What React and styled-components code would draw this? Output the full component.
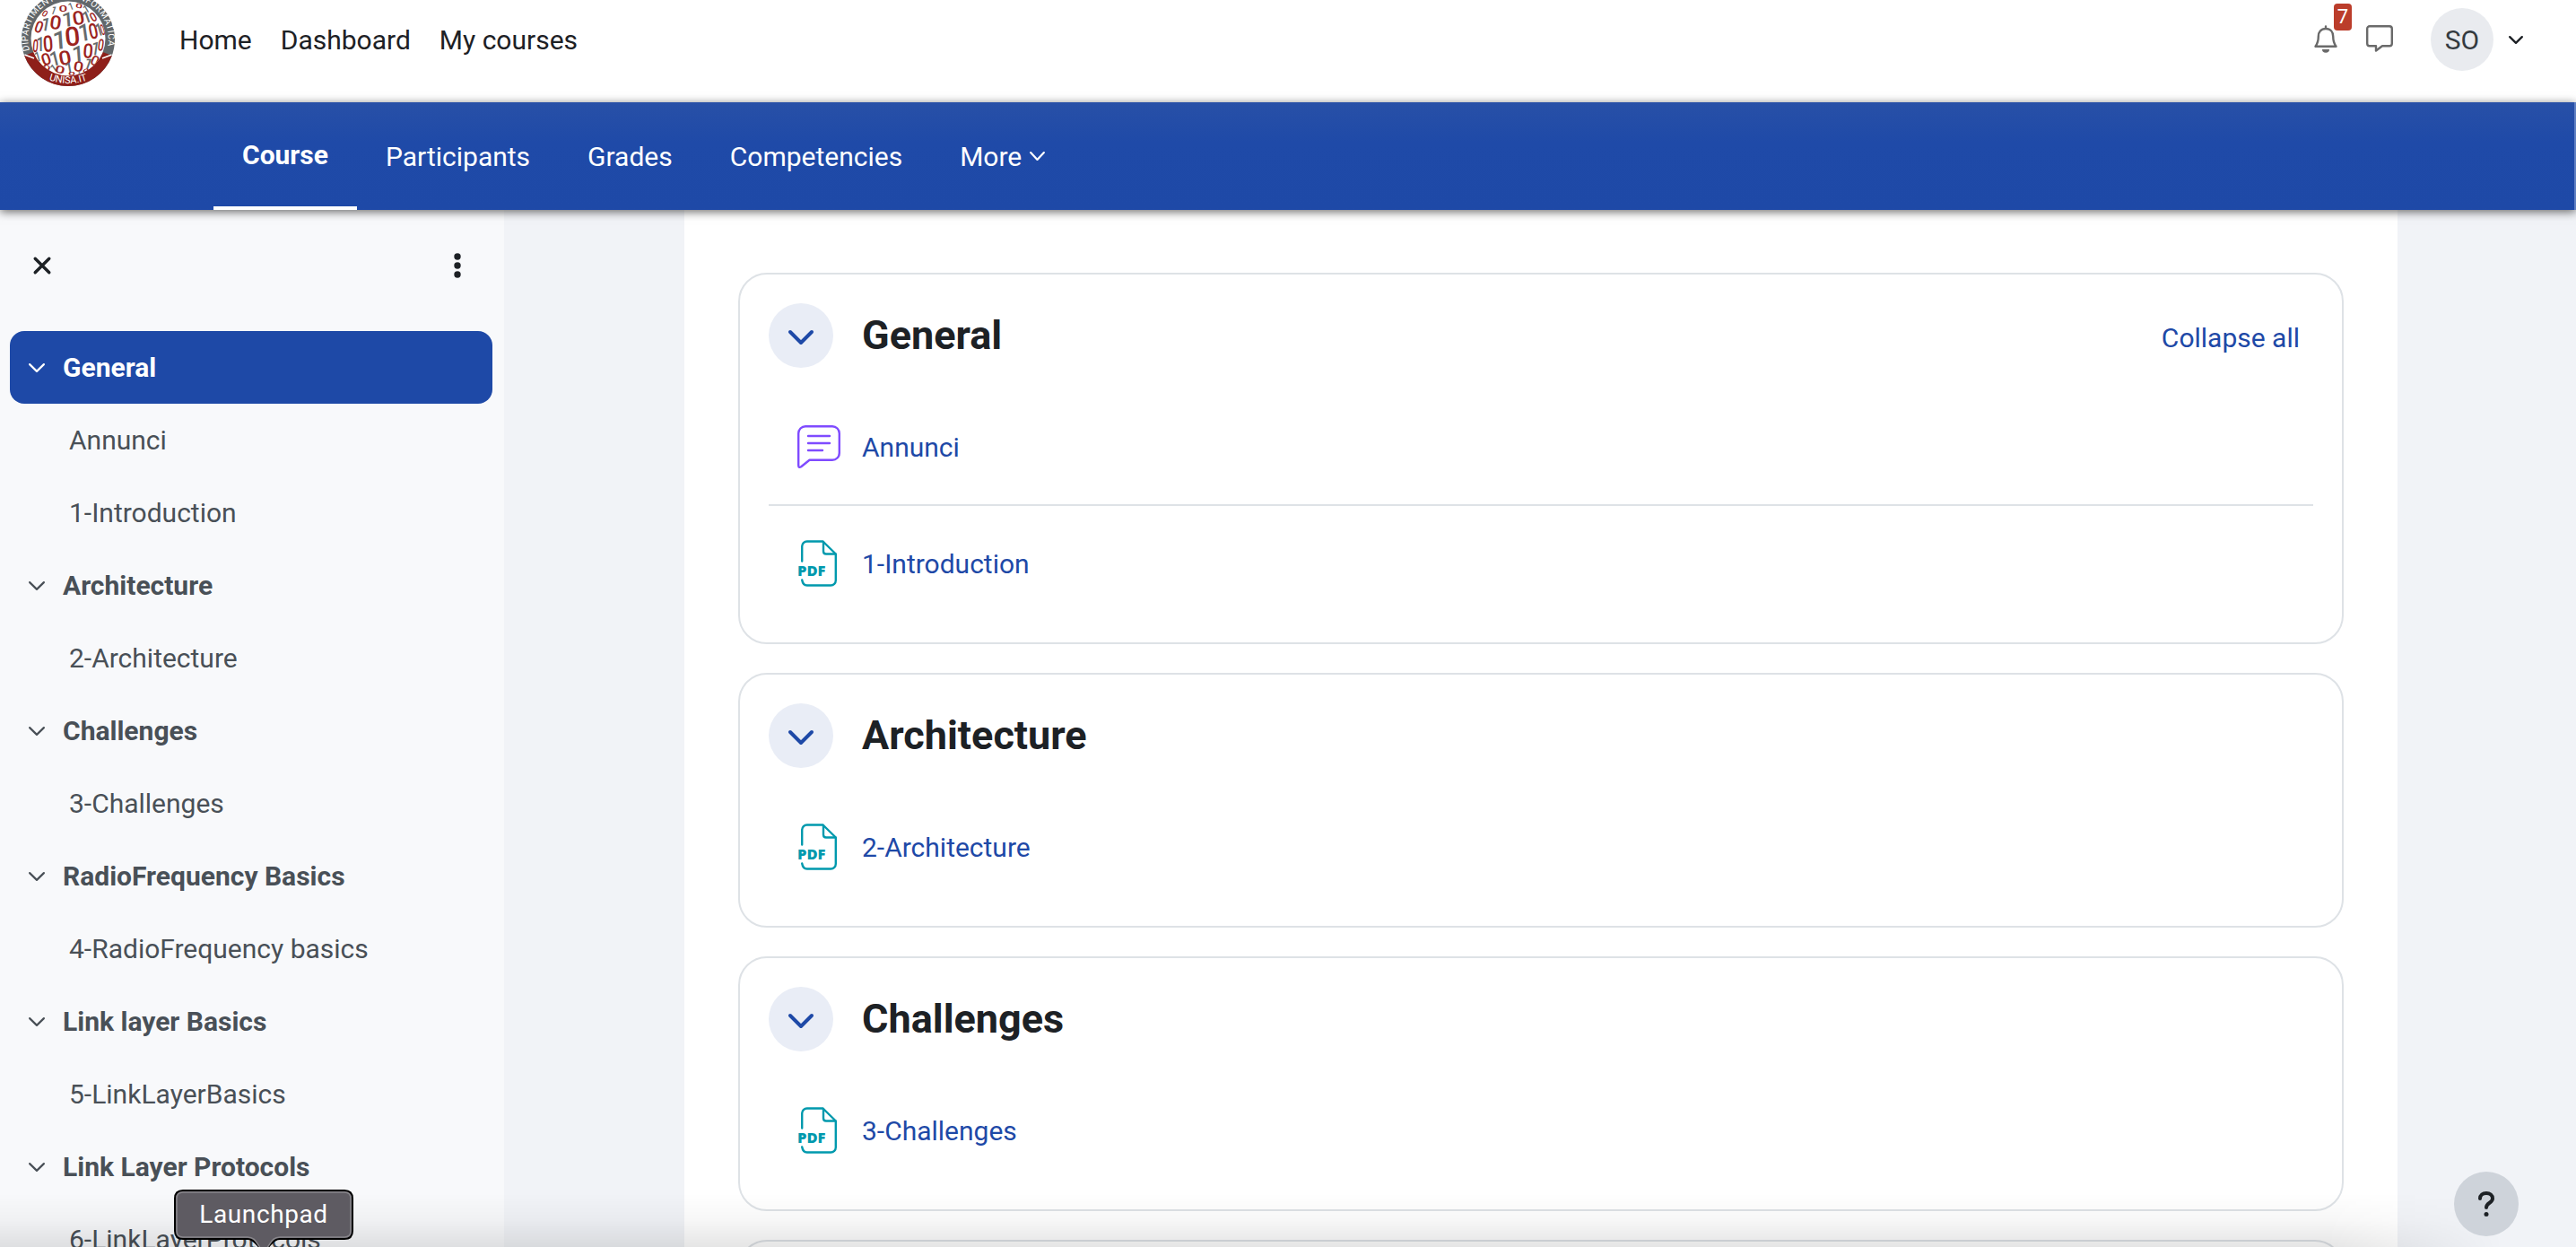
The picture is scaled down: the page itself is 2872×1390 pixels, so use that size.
import React from 'react';
import styled, { createGlobalStyle } from 'styled-components';

const Global = createGlobalStyle`
  *, *::before, *::after { box-sizing: border-box; }
  body {
    margin: 0;
    width: 2872px;
    height: 1390px;
    overflow: hidden;
    background: #f1f3f7;
    font-family: Roboto, "Liberation Sans", sans-serif;
    font-size: 30px;
    line-height: 45px;
    color: #1d2125;
  }
`;

const Page = styled.div`
  position: relative;
  display: flex;
  flex-direction: column;
  width: 2872px;
  height: 1390px;
  overflow: hidden;
`;

const Header = styled.header`
  display: flex;
  align-items: flex-start;
  height: 114px;
  flex: none;
  background: #fff;
  padding: 0 59px 0 22px;
`;

const LogoSvg = styled.svg`
  display: block;
  width: 108px;
  height: 108px;
  margin-top: -11px;
`;

const SiteNav = styled.nav`
  display: flex;
  gap: 32px;
  padding-left: 70px;
  margin-top: 22px;
`;

const SiteLink = styled.a`
  white-space: nowrap;
`;

const UserTools = styled.div`
  display: flex;
  margin-left: auto;
`;

const BellButton = styled.div`
  position: relative;
  width: 28px;
  height: 34px;
  margin-top: 28px;
`;

const Badge = styled.span`
  position: absolute;
  left: 22px;
  top: -24px;
  width: 20px;
  height: 30px;
  border-radius: 4px;
  background: #bb3d2b;
  color: #fff;
  font-size: 22px;
  line-height: 29px;
  text-align: center;
`;

const Icon = styled.svg`
  display: block;
  flex: none;
  width: ${(p) => p.$w}px;
  height: ${(p) => p.$h}px;
  margin: ${(p) => p.$m || 0};
  overflow: visible;
`;

const Avatar = styled.div`
  display: grid;
  place-items: center;
  width: 70px;
  height: 70px;
  margin: 9px 0 0 42px;
  border-radius: 50%;
  background: #e9ebef;
  color: #343a40;
`;

const CourseNav = styled.nav`
  position: relative;
  z-index: 2;
  display: flex;
  flex: none;
  height: 120px;
  padding-left: 238px;
  background: linear-gradient(#2850a7, #1f4aa8 45px, #1e49a7);
  border-right: 2px solid #5f7fc2;
  box-shadow: 0 2px 10px rgba(0, 0, 0, 0.6);
`;

const Tab = styled.a`
  display: flex;
  align-items: center;
  height: 120px;
  padding: ${(p) => (p.$active ? '0 32px 4px' : '0 32px')};
  color: #fff;
  font-weight: ${(p) => (p.$active ? 700 : 400)};
  box-shadow: ${(p) => (p.$active ? 'inset 0 -4px #fff' : 'none')};
  white-space: nowrap;
`;

const Body = styled.div`
  display: flex;
  flex: 1;
  min-height: 0;
`;

const Sidebar = styled.aside`
  width: 562px;
  flex: none;
  background: #f8f9fb;
`;

const DrawerBar = styled.div`
  display: flex;
  justify-content: space-between;
  align-items: center;
  height: 135px;
  padding: 0 46px 11px 37px;
`;

const IndexList = styled.div`
  display: flex;
  flex-direction: column;
  padding: 0 13px 0 11px;
`;

const IndexRow = styled.div`
  display: flex;
  align-items: center;
  flex: none;
  height: 81px;
  padding-left: ${(p) => (p.$child ? 66 : 21)}px;
  border-radius: 16px;
  background: ${(p) => (p.$active ? '#1e49a7' : 'transparent')};
  color: ${(p) => (p.$active ? '#fff' : '#495057')};
  font-weight: ${(p) => (p.$child ? 400 : 700)};
  white-space: nowrap;
`;

const Content = styled.main`
  width: 1910px;
  margin-left: 201px;
  padding: 70px 60px 0;
  background: #fff;
  display: flex;
  flex-direction: column;
  gap: 32px;
`;

const Card = styled.section`
  flex: none;
  border: 2px solid #dee2e6;
  border-radius: 32px;
  padding: 32px;
  height: ${(p) => p.$h}px;
`;

const CardHead = styled.div`
  display: flex;
  align-items: center;
  height: 72px;
`;

const Toggle = styled.div`
  display: grid;
  place-items: center;
  width: 72px;
  height: 72px;
  border-radius: 50%;
  background: #e9edf6;
`;

const CardTitle = styled.h3`
  margin: 0 0 0 32px;
  font-size: 45px;
  line-height: 54px;
  font-weight: 700;
`;

const CollapseLink = styled.a`
  margin: 4px 15px 0 auto;
  color: #1e49a7;
`;

const Activity = styled.div`
  display: flex;
  align-items: center;
  height: 130px;
  margin-top: ${(p) => (p.$first ? 22 : 0)}px;
  border-top: ${(p) => (p.$first ? 'none' : '2px solid #dee2e6')};
  padding: ${(p) => (p.$first ? '2px 0 0 32px' : '0 0 0 32px')};
  gap: 24px;
  color: #1e49a7;
`;

const IconSlot = styled.div`
  width: 48px;
  height: 52px;
  display: grid;
  place-items: center;
`;

const HelpButton = styled.div`
  position: absolute;
  z-index: 3;
  left: 2736px;
  top: 1306px;
  width: 72px;
  height: 72px;
  border-radius: 50%;
  display: grid;
  place-items: center;
  background: #ced3da;
`;

const DockShade = styled.div`
  position: absolute;
  z-index: 1;
  left: 0;
  bottom: 0;
  width: 2790px;
  height: 60px;
  background: linear-gradient(rgba(0, 0, 0, 0), rgba(0, 0, 0, 0.03) 50%, rgba(0, 0, 0, 0.1));
  mask-image: linear-gradient(to right, #000 93%, transparent);
`;

const Tooltip = styled.div`
  position: absolute;
  z-index: 4;
  left: 194px;
  top: 1326px;
  width: 200px;
  height: 64px;
`;

const TooltipText = styled.span`
  position: absolute;
  inset: 0;
  line-height: 55px;
  font-size: 28px;
  letter-spacing: 0.6px;
  color: #fff;
  text-align: center;
`;

const Chevron = ({ w, h, color, sw, m }) => (
  <Icon $w={w} $h={h} $m={m} viewBox={`0 0 ${w} ${h}`} fill="none" stroke={color} strokeWidth={sw} strokeLinecap="round" strokeLinejoin="round">
    <path d={`M${sw / 2} ${sw / 2}L${w / 2} ${h - sw / 2}L${w - sw / 2} ${sw / 2}`} />
  </Icon>
);

/* Digits on the globe: glyph, centre x, centre y, height, width, rotation. */
const digits = [
  ['0', 50, 15, 7, 5, 35], ['1', 60, 11.5, 9, 5, 20], ['0', 70.3, 9.5, 7, 8.5, 0], ['1', 79, 7, 8, 5, -20], ['0', 88, 6.5, 5, 7, 10], ['1', 96, 10, 9, 5, -30], ['0', 104, 19, 10, 6, -30],
  ['0', 43.5, 30, 13, 8, 20], ['1', 51, 27, 14.5, 9, 10], ['0', 62, 25, 15, 11.5, 8], ['1', 75.5, 21.5, 16, 12, -4], ['0', 87.5, 20, 15, 12, -10], ['1', 96.5, 19, 13, 9, -20],
  ['0', 39.5, 51, 14, 5.5, 4], ['1', 45, 49, 16, 8, 0], ['0', 53.5, 48.5, 18, 10, -4], ['1', 66.5, 44.5, 20, 14, -4], ['0', 80.7, 40.5, 21, 15, -6], ['1', 94, 36, 19, 12, -8], ['0', 104, 34.5, 17, 9, -12], ['1', 110.5, 33, 14, 7, -16], ['0', 114.3, 33, 12, 4, -16],
  ['1', 42, 63, 11, 6, -16], ['0', 51.5, 66, 13, 9.5, -18], ['1', 61, 65, 16, 10, -14], ['0', 72.3, 64.5, 15.5, 12.5, -10], ['1', 87, 60, 18, 12, -4], ['0', 98.3, 56.7, 16, 10, 4], ['1', 106.5, 54, 15, 8, 8], ['0', 112.5, 50, 13, 6, 8],
  ['0', 52, 75.5, 6, 8, 30], ['1', 60, 76, 9, 6, -35], ['0', 67, 77.5, 8, 10, 12], ['1', 77, 75.5, 12, 8, -10], ['0', 87.7, 74, 11, 10, 10], ['1', 98.5, 71, 12, 8, 20], ['0', 106, 67.5, 11, 8, 24],
  ['0', 80, 82, 3.5, 7, 0], ['1', 88, 81.5, 4, 4, 10], ['0', 96, 79, 4.5, 7, -20],
];

const Logo = () => (
  <LogoSvg viewBox="22 -11 108 108">
    <defs>
      <path id="ring-top" d="M33.2 56.2A44.800 44.800 0 1 1 118.800 56.200" />
      <path id="ring-bottom" d="M50 87.500Q76 98.500 102 87.500" />
      <clipPath id="globe"><circle cx="76" cy="43" r="41.500" /></clipPath>
    </defs>
    <circle cx="76" cy="44" r="52" fill="#62676a" />
    <path d="M27.200 62A52 52 0 0 0 124.800 62L76 43Z" fill="#8e1f1a" />
    <path d="M27.500 61L38 65M124.500 61L114 65" stroke="#fff" strokeWidth="1.500" />
    <circle cx="76" cy="43" r="41.500" fill="#fff" />
    <g clipPath="url(#globe)" fontFamily="Roboto, sans-serif" textAnchor="middle">
      {digits.map(([c, x, y, h, w, r]) => (
        <text key={`${x}-${y}`} fontSize={h / 0.711} fontWeight="500" fill={c === '0' ? '#9c2320' : '#666b6e'}
          transform={`translate(${x} ${y}) rotate(${r}) scale(${w / h / 0.7} 1) translate(0 ${h / 2})`}>{c}</text>
      ))}
    </g>
    <text fontFamily="Roboto, sans-serif" fontSize="10.200" fill="#fff">
      <textPath href="#ring-top" textLength="162" lengthAdjust="spacing">DIPARTIMENTO DI INFORMATICA</textPath>
    </text>
    <text fontFamily="Roboto, sans-serif" fontSize="11" fill="#fff" textAnchor="middle">
      <textPath href="#ring-bottom" startOffset="50%">UNISA.IT</textPath>
    </text>
  </LogoSvg>
);

const ForumIcon = () => (
  <Icon $w={48} $h={48} viewBox="0 0 48 48" fill="none" stroke="#7f4bff" strokeWidth="2.4" strokeLinecap="round" strokeLinejoin="round">
    <path d="M9 1.2H39A7.8 7.8 0 0 1 46.800 9V31A7.800 7.800 0 0 1 39 38.800H13.500L4.200 46.200Q1.200 48 1.200 44.500V9A7.800 7.800 0 0 1 9 1.200Z" />
    <path d="M12 12H36M12 20H36M12 28H28" />
  </Icon>
);

const PdfIcon = () => (
  <Icon $w={48} $h={52} viewBox="0 0 48 52" fill="none" stroke="#0099ad" strokeWidth="2.4" strokeLinecap="round" strokeLinejoin="round">
    <path d="M5.200 23.500V7A5.500 5.500 0 0 1 10.700 1.500H28.500L42.800 15.500V45A5.500 5.500 0 0 1 37.300 50.500H10.700Q6.200 50.500 5.200 44.500" />
    <path d="M29 2V12.500Q29 15.500 32 15.500H42.500" />
    <text x="0" y="39.500" fill="#0099ad" stroke="none" fontFamily="Open Sans, sans-serif" fontWeight="800" fontSize="16.500" textLength="31.500" lengthAdjust="spacingAndGlyphs">PDF</text>
  </Icon>
);

const index = [
  { t: 'General', active: true }, { t: 'Annunci', child: true }, { t: '1-Introduction', child: true },
  { t: 'Architecture' }, { t: '2-Architecture', child: true },
  { t: 'Challenges' }, { t: '3-Challenges', child: true },
  { t: 'RadioFrequency Basics' }, { t: '4-RadioFrequency basics', child: true },
  { t: 'Link layer Basics' }, { t: '5-LinkLayerBasics', child: true },
  { t: 'Link Layer Protocols' }, { t: '6-LinkLayerProtocols', child: true },
];

const sections = [
  { title: 'General', h: 414, collapse: true, items: [{ t: 'Annunci', forum: true }, { t: '1-Introduction' }] },
  { title: 'Architecture', h: 284, items: [{ t: '2-Architecture' }] },
  { title: 'Challenges', h: 284, items: [{ t: '3-Challenges' }] },
  { title: '', h: 284, items: [] },
];

export default function App() {
  return (
    <Page>
      <Global />
      <Header>
        <Logo />
        <SiteNav>
          <SiteLink>Home</SiteLink>
          <SiteLink>Dashboard</SiteLink>
          <SiteLink>My courses</SiteLink>
        </SiteNav>
        <UserTools>
          <BellButton>
            <Icon $w={26} $h={32} viewBox="0 0 26 32" fill="none" stroke="#6a6a6a" strokeWidth="2.4" strokeLinecap="round" strokeLinejoin="round">
              <path d="M13 1.500V4M13 4C7.500 4 4.800 8 4.800 12.500C4.800 18.500 3.500 21 1.500 23.800H24.500C22.500 21 21.200 18.500 21.200 12.500C21.200 8 18.500 4 13 4Z" />
              <path d="M9 27H17A4 3.800 0 0 1 9 27Z" fill="#6a6a6a" stroke="none" />
            </Icon>
            <Badge>7</Badge>
          </BellButton>
          <Icon $w={30} $h={31} $m="28px 0 0 30px" viewBox="0 0 30 31" fill="none" stroke="#6a6a6a" strokeWidth="2.400" strokeLinejoin="round">
            <path d="M4 1.200H26A2.800 2.800 0 0 1 28.800 4V20.500A2.800 2.800 0 0 1 26 23.300H18L11 28.500V23.300H4A2.800 2.800 0 0 1 1.200 20.500V4A2.800 2.800 0 0 1 4 1.200Z" />
          </Icon>
          <Avatar>SO</Avatar>
          <Chevron w={16} h={9} sw={2.4} color="#1d2125" m="40px 0 0 17px" />
        </UserTools>
      </Header>
      <CourseNav>
        <Tab $active>Course</Tab>
        <Tab>Participants</Tab>
        <Tab>Grades</Tab>
        <Tab>Competencies</Tab>
        <Tab>More<Chevron w={17} h={10} sw={2.2} color="#fff" m="0 0 0 9px" /></Tab>
      </CourseNav>
      <Body>
        <Sidebar>
          <DrawerBar>
            <Icon $w={20} $h={20} viewBox="0 0 20 20" stroke="#1d2125" strokeWidth="3.400" strokeLinecap="round"><path d="M2.200 2.200L17.800 17.800M17.800 2.200L2.200 17.800" /></Icon>
            <Icon $w={12} $h={28} viewBox="0 0 12 28" fill="#1d2125"><circle cx="6" cy="4" r="3.700" /><circle cx="6" cy="14" r="3.700" /><circle cx="6" cy="24" r="3.700" /></Icon>
          </DrawerBar>
          <IndexList>
            {index.map((r) => (
              <IndexRow key={r.t} $child={r.child} $active={r.active}>
                {!r.child && <Chevron w={18} h={10} sw={2.2} color={r.active ? '#fff' : '#495057'} m="0 20px 0 0" />}
                {r.t}
              </IndexRow>
            ))}
          </IndexList>
        </Sidebar>
        <Content>
          {sections.map((s) => (
            <Card key={s.title} $h={s.h}>
              {s.title && (
                <CardHead>
                  <Toggle><Chevron w={28} h={16} sw={4} color="#1e49a7" m="4px 0 0 0" /></Toggle>
                  <CardTitle>{s.title}</CardTitle>
                  {s.collapse && <CollapseLink>Collapse all</CollapseLink>}
                </CardHead>
              )}
              {s.items.map((a, i) => (
                <Activity key={a.t} $first={i === 0}>
                  <IconSlot>{a.forum ? <ForumIcon /> : <PdfIcon />}</IconSlot>
                  {a.t}
                </Activity>
              ))}
            </Card>
          ))}
        </Content>
      </Body>
      <DockShade />
      <HelpButton>
        <Icon $w={18} $h={28} viewBox="0 0 18 28" fill="none" stroke="#1d2125" strokeWidth="4" strokeLinecap="round">
          <path d="M2 8C2 4 5 2 9 2S16 4 16 8C16 13 9 12.500 9 18" /><circle cx="9" cy="25.500" r="2.500" fill="#1d2125" stroke="none" />
        </Icon>
      </HelpButton>
      <Tooltip>
        <Icon $w={200} $h={64} viewBox="0 0 200 64">
          <path d="M10 1H190Q199 1 199 10V46Q199 55 190 55H118C108 55 108 66 100 66S92 55 82 55H10Q1 55 1 46V10Q1 1 10 1Z" fill="#5e5b62" stroke="#000" strokeWidth="2" />
          <path d="M10 3H190Q197 3 197 10V46Q197 53 190 53H118C106 53 108 66 100 66S94 53 82 53H10Q3 53 3 46V10Q3 3 10 3Z" fill="none" stroke="#87858a" strokeWidth="1.500" />
        </Icon>
        <TooltipText>Launchpad</TooltipText>
      </Tooltip>
    </Page>
  );
}
